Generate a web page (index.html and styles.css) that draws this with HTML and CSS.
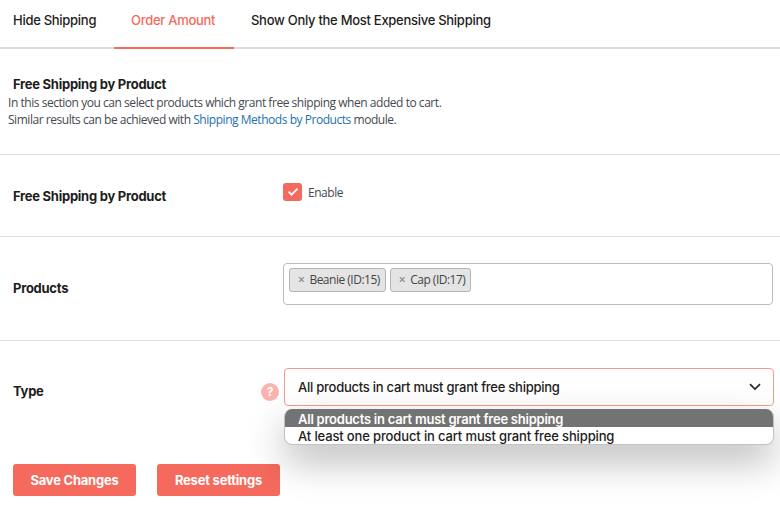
FILE: index.html
```html
<!DOCTYPE html>
<html lang="en">
<head>
    <meta charset="UTF-8">
    <meta name="viewport" content="width=device-width, initial-scale=1.0">
    <title>Free Shipping by Product</title>
    <link rel="stylesheet" href="styles.css">
</head>
<body>
    <nav class="tabs">
        <a class="tab tab-first">Hide Shipping</a>
        <a class="tab active">Order Amount</a>
        <a class="tab">Show Only the Most Expensive Shipping</a>
    </nav>

    <section class="intro">
        <h2>Free Shipping by Product</h2>
        <p>In this section you can select products which grant free shipping when added to cart.</p>
        <p>Similar results can be achieved with <a class="link">Shipping Methods by Products</a> module.</p>
    </section>

    <form>
        <div class="row row-enable">
            <div class="label">Free Shipping by Product</div>
            <div class="field">
                <label class="checkbox">
                    <span class="box">
                        <svg width="12" height="10" viewBox="0 0 12 10" fill="none" stroke="#fff" stroke-width="1.8">
                            <path d="M1.5 4.7 4.6 7.7 10.6 1.7"/>
                        </svg>
                    </span>
                    Enable
                </label>
            </div>
        </div>

        <div class="row row-products">
            <div class="label">Products</div>
            <div class="field">
                <div class="multi-select">
                    <span class="tag"><span class="remove">×</span>Beanie (ID:15)</span>
                    <span class="tag"><span class="remove">×</span>Cap (ID:17)</span>
                </div>
            </div>
        </div>

        <div class="row row-type">
            <div class="label">Type <span class="help">?</span></div>
            <div class="field">
                <div class="select">
                    <span>All products in cart must grant free shipping</span>
                    <svg width="12" height="8" viewBox="0 0 12 8" fill="none" stroke="#23282d" stroke-width="1.7">
                        <path d="M1 1.2 6 6 11 1.2"/>
                    </svg>
                    <ul class="options">
                        <li class="selected">All products in cart must grant free shipping</li>
                        <li>At least one product in cart must grant free shipping</li>
                    </ul>
                </div>
            </div>
        </div>

        <div class="buttons">
            <button type="button" class="btn">Save Changes</button>
            <button type="button" class="btn">Reset settings</button>
        </div>
    </form>
</body>
</html>
```
FILE: styles.css
```css
:root {
    --primary-color: #f56a5d;
    --text-color: #1d1d20;
    --muted-color: #444950;
    --link-color: #2271b1;
    --border-color: #dfdfdf;
}

* {
    box-sizing: border-box;
}

body {
    margin: 0;
    height: 517px;
    overflow: hidden;
    background-color: #fff;
    color: var(--text-color);
    font-family: Inter, "Liberation Sans", sans-serif;
    font-size: 13px;
    letter-spacing: -0.26px;
}

/* Tabs */
.tabs {
    display: flex;
    height: 49px;
    box-shadow: inset 0 -2px 0 #dcdcdc;
}

.tab {
    padding: 12px 17px 0;
    font-weight: 500;
    line-height: 16px;
    letter-spacing: -0.28px;
    white-space: nowrap;
}

.tab-first {
    width: 114px;
    padding-left: 13px;
}

.tab.active {
    width: 120px;
    color: var(--primary-color);
    border-bottom: 2px solid var(--primary-color);
}

.intro {
    height: 106px;
    padding: 27px 8px 0;
    border-bottom: 1px solid var(--border-color);
    color: var(--muted-color);
    font-family: "Open Sans", "Noto Sans", sans-serif;
    font-size: 12px;
    letter-spacing: -0.46px;
}

.intro h2 {
    margin: 0 0 1px 5px;
    color: var(--text-color);
    font: 700 13px/17px Inter, sans-serif;
    letter-spacing: -0.26px;
}

.intro p {
    margin: 0;
    line-height: 17px;
    white-space: nowrap;
}

.link {
    color: var(--link-color);
}

/* Settings rows */
.row {
    display: flex;
    border-bottom: 1px solid var(--border-color);
}

.label {
    display: flex;
    justify-content: space-between;
    width: 283px;
    padding: 0 5px 0 13px;
    font-weight: 700;
    line-height: 17px;
}

.field {
    width: 490px;
}

.row-enable {
    height: 82px;
    padding-top: 28px;
}

.row-enable .label {
    padding-top: 5px;
}

.checkbox {
    display: flex;
    align-items: center;
    gap: 6px;
    height: 18px;
    color: var(--muted-color);
    font-family: "Open Sans", "Noto Sans", sans-serif;
    font-size: 12px;
    letter-spacing: -0.46px;
}

.box {
    display: flex;
    align-items: center;
    justify-content: center;
    width: 19px;
    height: 18px;
    border-radius: 3px;
    background-color: var(--primary-color);
}

.row-products {
    height: 104px;
    padding-top: 26px;
}

.row-products .label {
    padding-top: 17px;
}

.multi-select {
    display: flex;
    gap: 4px;
    height: 42px;
    padding: 4px 5px;
    border: 1px solid #bdbdbd;
    border-radius: 4px;
}

.tag {
    height: 24px;
    padding: 0 5px 0 8px;
    border: 1px solid #b5b5b5;
    border-radius: 3px;
    background-color: #e4e4e4;
    color: #444;
    font: 12px/22px "Open Sans", "Noto Sans", sans-serif;
    letter-spacing: -0.5px;
    white-space: nowrap;
}

.remove {
    margin-right: 5px;
    color: #888;
    font-weight: 600;
}

.row-type {
    height: 96px;
    padding-top: 27px;
    border-bottom: none;
}

.row-type .label {
    width: 284px;
    padding-top: 15px;
}

.help {
    width: 18px;
    height: 18px;
    border-radius: 50%;
    background-color: #fbb4ad;
    color: #fff;
    font-size: 12px;
    line-height: 18px;
    text-align: center;
}

.select {
    position: relative;
    display: flex;
    align-items: center;
    justify-content: space-between;
    height: 38px;
    padding: 0 12px 0 13px;
    border: 1px solid #f69a91;
    border-radius: 4px;
    font-weight: 500;
    letter-spacing: -0.25px;
    white-space: nowrap;
}

/* Open dropdown list */
.options {
    position: absolute;
    top: 40px;
    left: -1px;
    right: -1px;
    margin: 0;
    padding: 0;
    overflow: hidden;
    border: 1px solid #c2c2c2;
    border-top: none;
    border-radius: 8px;
    background-color: #fff;
    box-shadow: 0 16px 38px rgba(0, 0, 0, 0.28);
    letter-spacing: -0.14px;
    list-style: none;
}

.options li {
    height: 17px;
    padding-left: 13px;
    line-height: 18px;
}

.options .selected {
    height: 18px;
    background-color: #737373;
    color: #fff;
    font-weight: 600;
    line-height: 20px;
    letter-spacing: -0.24px;
}

.buttons {
    display: flex;
    gap: 21px;
    padding: 27px 0 0 13px;
}

.btn {
    width: 123px;
    height: 32px;
    padding: 0;
    border: none;
    border-radius: 3px;
    background-color: var(--primary-color);
    color: #fff;
    font: 700 13px Inter, sans-serif;
    letter-spacing: -0.22px;
}
```
